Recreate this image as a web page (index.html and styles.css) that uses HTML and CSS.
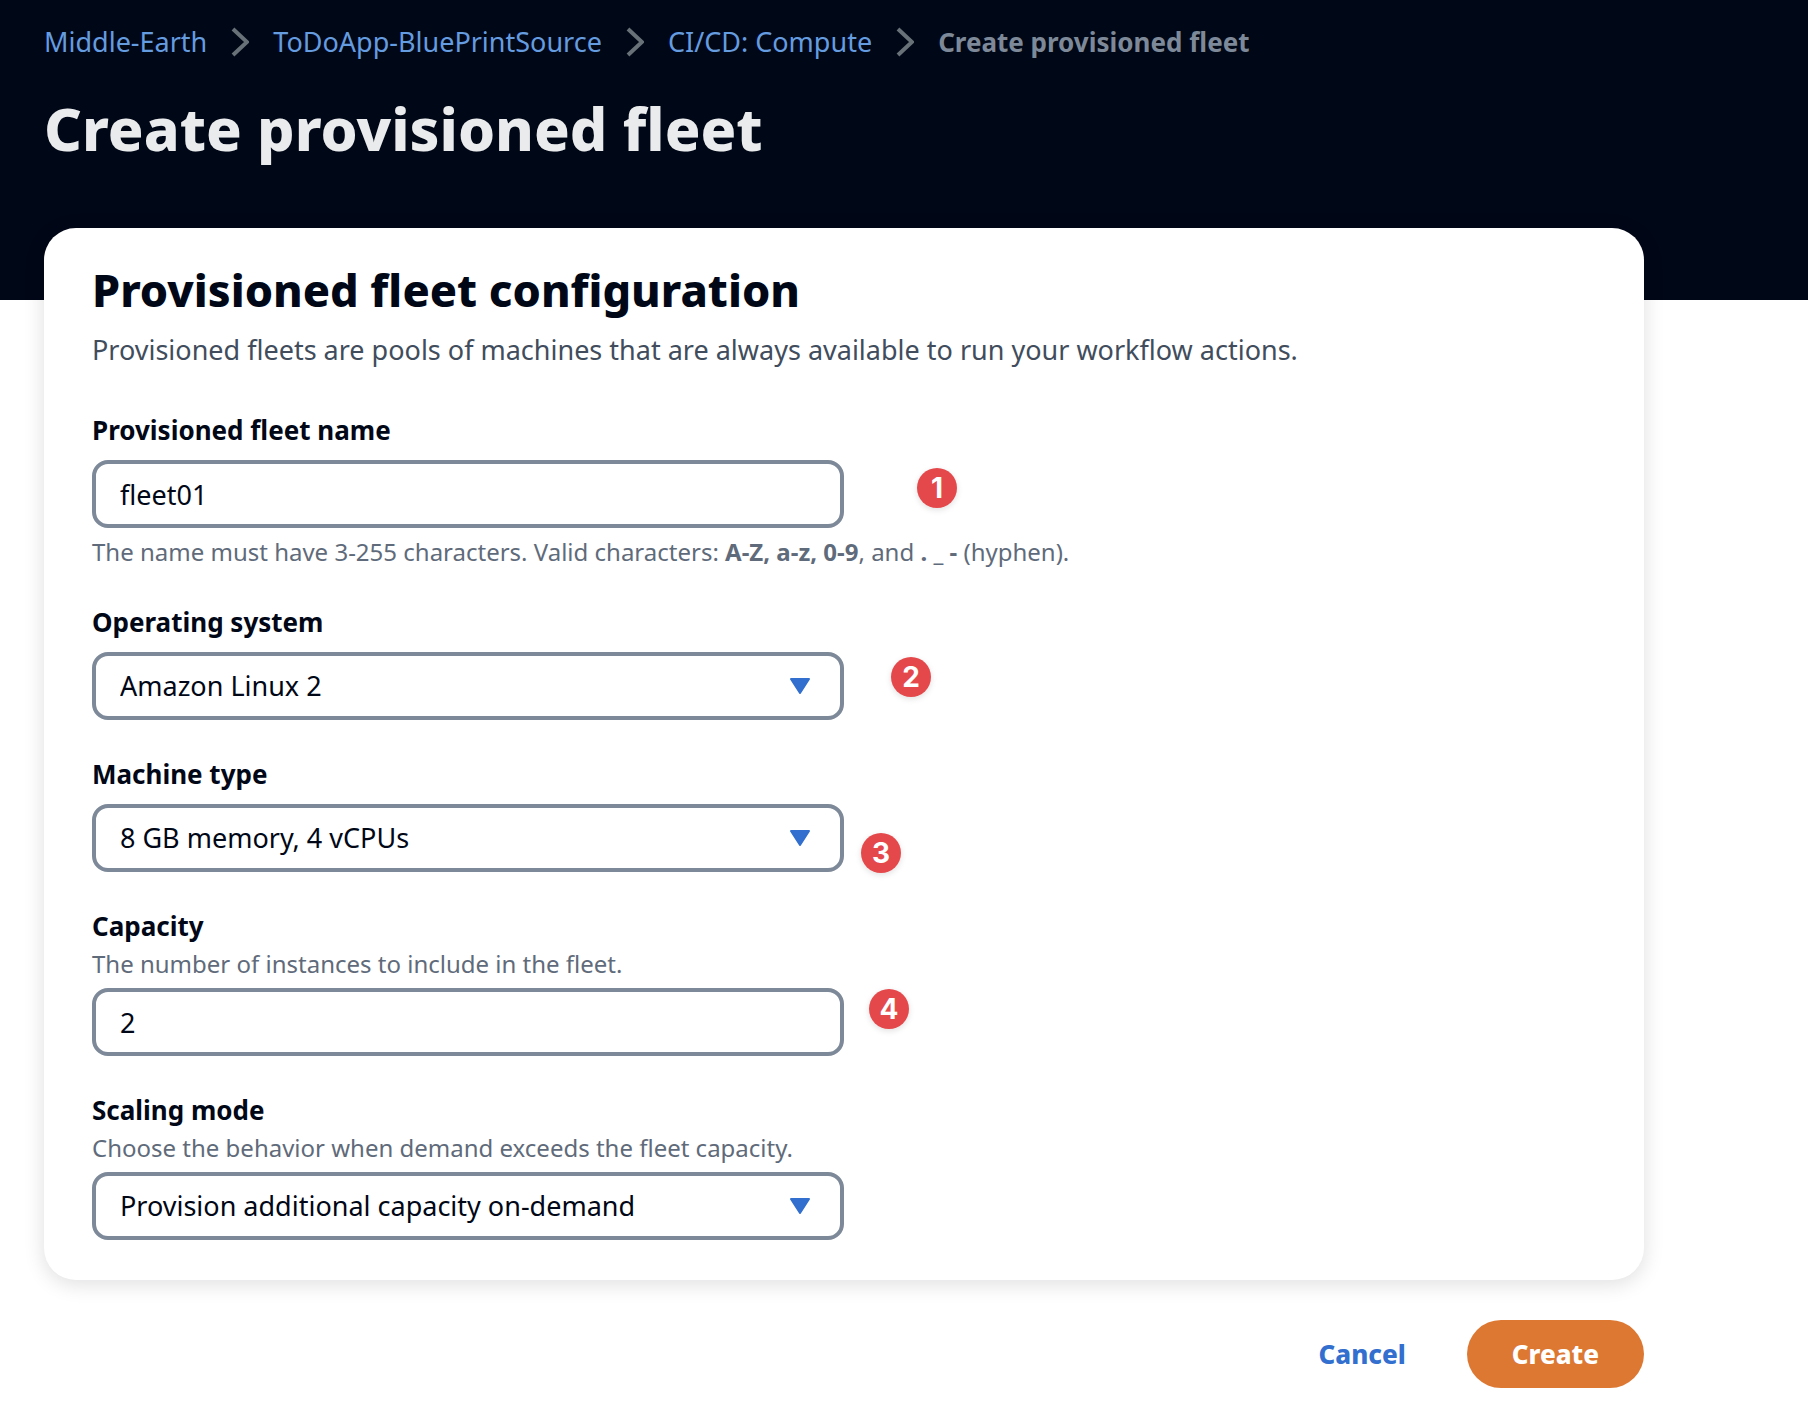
FILE: index.html
```html
<!DOCTYPE html>
<html lang="en">
<head>
<meta charset="utf-8">
<meta name="viewport" content="width=device-width, initial-scale=1">
<title>Create provisioned fleet</title>
<link rel="stylesheet" href="styles.css">
</head>
<body>
<header class="page-header">
  <nav aria-label="Breadcrumb">
    <ol class="breadcrumb">
      <li><a href="#">Middle-Earth</a><svg class="chevron" viewBox="0 0 18 30" aria-hidden="true"><path d="M2 2 16 15 2 28"/></svg></li>
      <li><a href="#">ToDoApp-BluePrintSource</a><svg class="chevron" viewBox="0 0 18 30" aria-hidden="true"><path d="M2 2 16 15 2 28"/></svg></li>
      <li><a href="#">CI/CD: Compute</a><svg class="chevron" viewBox="0 0 18 30" aria-hidden="true"><path d="M2 2 16 15 2 28"/></svg></li>
      <li class="current" aria-current="page">Create provisioned fleet</li>
    </ol>
  </nav>
  <h1>Create provisioned fleet</h1>
</header>
<main class="content">
  <form>
    <section class="card">
      <h2>Provisioned fleet configuration</h2>
      <p class="description">Provisioned fleets are pools of machines that are always available to run your workflow actions.</p>
      <div class="fields">
        <div class="field">
          <label for="name">Provisioned fleet name</label>
          <div class="control">
            <input id="name" type="text" value="fleet01" aria-describedby="name-hint">
            <span class="badge badge-name">1</span>
          </div>
          <p class="hint hint-below" id="name-hint">The name must have 3-255 characters. Valid characters: <b>A-Z, a-z, 0-9</b>, and <b>. _ -</b> (hyphen).</p>
        </div>
        <div class="field">
          <label for="os">Operating system</label>
          <div class="control">
            <select id="os"><option>Amazon Linux 2</option></select>
            <svg class="caret" viewBox="0 0 20 16" aria-hidden="true"><path d="M1 1H19L10 15Z"/></svg>
            <span class="badge badge-os">2</span>
          </div>
        </div>
        <div class="field">
          <label for="machine">Machine type</label>
          <div class="control">
            <select id="machine"><option>8 GB memory, 4 vCPUs</option></select>
            <svg class="caret" viewBox="0 0 20 16" aria-hidden="true"><path d="M1 1H19L10 15Z"/></svg>
            <span class="badge badge-machine">3</span>
          </div>
        </div>
        <div class="field">
          <label for="capacity">Capacity</label>
          <p class="hint" id="capacity-hint">The number of instances to include in the fleet.</p>
          <div class="control">
            <input id="capacity" type="text" inputmode="numeric" value="2" aria-describedby="capacity-hint">
            <span class="badge badge-capacity">4</span>
          </div>
        </div>
        <div class="field">
          <label for="scaling">Scaling mode</label>
          <p class="hint" id="scaling-hint">Choose the behavior when demand exceeds the fleet capacity.</p>
          <div class="control">
            <select id="scaling" aria-describedby="scaling-hint"><option>Provision additional capacity on-demand</option></select>
            <svg class="caret" viewBox="0 0 20 16" aria-hidden="true"><path d="M1 1H19L10 15Z"/></svg>
          </div>
        </div>
      </div>
    </section>
    <div class="actions">
      <button type="button" class="button button-link">Cancel</button>
      <button type="submit" class="button button-primary">Create</button>
    </div>
  </form>
</main>
</body>
</html>
```
FILE: styles.css
```css
* {
  box-sizing: border-box;
}

body {
  margin: 0;
  background: #fff;
  color: #000716;
  font-family: "Noto Sans", sans-serif;
  font-size: 27px;
  line-height: 44px;
}

h1,
h2,
p,
ol {
  margin: 0;
  padding: 0;
}

.page-header {
  padding: 20px 44px 132px;
  background: #000716;
}

.breadcrumb {
  display: flex;
  flex-wrap: wrap;
  gap: 24px;
  list-style: none;
}

.breadcrumb li {
  display: flex;
  align-items: center;
  gap: 24px;
}

.breadcrumb a {
  color: #659ce0;
  text-decoration: none;
}

.breadcrumb .current {
  color: #7d8998;
  font-size: 26px;
  font-weight: 700;
}

.chevron {
  width: 18px;
  height: 30px;
  fill: none;
  stroke: #687078;
  stroke-width: 4;
}

h1 {
  margin-top: 24px;
  color: #e9ebed;
  font-size: 59px;
  font-weight: 800;
  line-height: 80px;
}

.content {
  max-width: 1688px;
  margin-top: -72px;
  padding: 0 44px 24px;
}

.card {
  padding: 28px 48px 40px;
  border-radius: 32px;
  background: #fff;
  box-shadow: 0 4px 20px 1px rgba(0, 7, 22, 0.12);
}

h2 {
  margin-bottom: 4px;
  font-size: 45px;
  font-weight: 800;
  line-height: 68px;
}

.description {
  color: #414d5c;
}

.fields {
  display: flex;
  flex-direction: column;
  gap: 32px;
  margin-top: 36px;
}

.field label {
  display: block;
  font-size: 26px;
  font-weight: 700;
}

.hint {
  color: #5f6b7a;
  font-size: 24px;
  line-height: 32px;
}

.hint-below {
  margin-top: 8px;
}

.control {
  position: relative;
  max-width: 752px;
  margin-top: 8px;
}

.control input,
.control select {
  display: block;
  width: 100%;
  height: 68px;
  padding: 0 24px;
  border: 4px solid #7d8998;
  border-radius: 16px;
  background: #fff;
  color: #000716;
  font: inherit;
  appearance: none;
}

.caret {
  position: absolute;
  top: 26px;
  right: 34px;
  width: 20px;
  height: 16px;
  fill: #326fce;
  stroke: #326fce;
  stroke-width: 2;
  stroke-linejoin: round;
  pointer-events: none;
}

.badge {
  position: absolute;
  width: 40px;
  height: 40px;
  border-radius: 50%;
  background: #e5484b;
  box-shadow: 0 2px 6px rgba(0, 0, 0, 0.12);
  color: #fff;
  font-family: Inter, sans-serif;
  font-size: 28px;
  font-weight: 700;
  line-height: 40px;
  text-align: center;
}

.badge-name {
  top: 8px;
  left: 825px;
}

.badge-os {
  top: 5px;
  left: 799px;
}

.badge-machine {
  top: 29px;
  left: 769px;
}

.badge-capacity {
  top: 1px;
  left: 777px;
}

.actions {
  display: flex;
  justify-content: flex-end;
  gap: 16px;
  margin-top: 40px;
}

.button {
  height: 68px;
  padding: 0 45px;
  border: 0;
  border-radius: 34px;
  font: inherit;
  font-size: 26px;
  font-weight: 800;
}

.button-link {
  background: transparent;
  color: #326fce;
}

.button-primary {
  background: #dd7833;
  color: #fff;
}
```
